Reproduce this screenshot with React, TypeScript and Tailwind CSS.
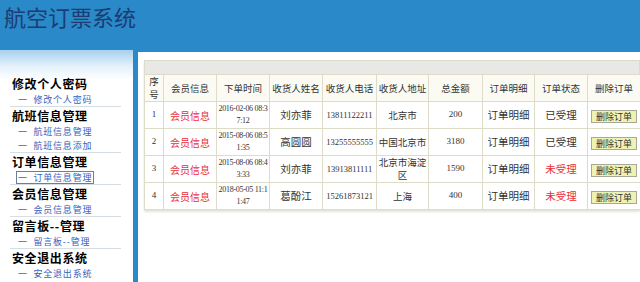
import React from "react";

const menu = [
  { title: "修改个人密码", subs: ["修改个人密码"] },
  { title: "航班信息管理", subs: ["航班信息管理", "航班信息添加"] },
  { title: "订单信息管理", subs: ["订单信息管理"], focused: true },
  { title: "会员信息管理", subs: ["会员信息管理"] },
  { title: "留言板--管理", subs: ["留言板--管理"] },
  { title: "安全退出系统", subs: ["安全退出系统"] },
];

const headers = ["序号", "会员信息", "下单时间", "收货人姓名", "收货人电话", "收货人地址", "总金额", "订单明细", "订单状态", "删除订单"];
const widths = [19, 53, 53, 53, 54, 52, 54, 52, 53, 53];

const orders = [
  { id: "1", time: "2016-02-06 08:37:12", name: "刘亦菲", phone: "13811122211", addr: "北京市", total: "200", done: true },
  { id: "2", time: "2015-08-06 08:51:35", name: "高圆圆", phone: "13255555555", addr: "中国北京市", total: "3180", done: true },
  { id: "3", time: "2015-08-06 08:43:33", name: "刘亦菲", phone: "13913811111", addr: "北京市海淀区", total: "1590", done: false },
  { id: "4", time: "2018-05-05 11:11:47", name: "葛酚江", phone: "15261873121", addr: "上海", total: "400", done: false },
];

const sans = "font-['Microsoft_YaHei','Noto_Sans_CJK_SC',sans-serif]";
const serif = "font-['Liberation_Serif','Noto_Sans_CJK_SC',serif]";
const cell = "border border-[#dcdcc8] text-center align-middle px-[1px]";

export default function App() {
  return (
    <div className={`w-[640px] h-[282px] overflow-hidden bg-[#2a89c8] ${sans}`}>
      {/* header */}
      <div className="h-[50px] pl-[4px] pt-[2px]">
        <h1 className="text-[22px] leading-[28px] text-[#1b3d74]">航空订票系统</h1>
      </div>

      <div className="flex h-[232px]">
        {/* sidebar */}
        <div className="w-[133px] shrink-0 bg-[linear-gradient(to_bottom,#a6d0ee_0px,#e4f1fb_16px,#ffffff_30px)] pt-[25px] pl-[10px] pr-[12px]">
          {menu.map((m, i) => (
            <div key={m.title} className={i < menu.length - 1 ? "border-b border-[#d6dde3]" : ""}>
              <div className="pl-[2px] text-[12px] leading-[17px] h-[17px] font-bold tracking-[0.6px] text-black">
                {m.title}
              </div>
              {m.subs.map((s) => (
                <div key={s} className="flex items-center pl-[6px] h-[14px]">
                  <span
                    className={`text-[9px] leading-[11px] tracking-[0.8px] text-[#3464bd] px-[1px] ${
                      m.focused ? "border border-[#6d7f98]" : "border border-transparent"
                    }`}
                  >
                    一&nbsp;&nbsp;{s}
                  </span>
                </div>
              ))}
            </div>
          ))}
        </div>

        {/* main */}
        <div className="ml-[5px] mt-[2px] flex-1 bg-white pl-[6px] pt-[8px] overflow-hidden">
          <div className="w-[496px] shadow-[0_2px_2px_#e4e4dc]">
            <div className="h-[14px] bg-[#e8e8e6] border border-[#dcdcc8] border-b-0" />
            <table className="border-collapse table-fixed w-[496px] text-[10px] text-[#333]">
              <colgroup>
                {widths.map((w, i) => (
                  <col key={i} style={{ width: w }} />
                ))}
              </colgroup>
              <thead>
                <tr className="h-[27px] bg-[#fbfbf3]">
                  {headers.map((h, i) => (
                    <th key={h} className={`${cell} font-normal text-[9.5px] leading-[13px] ${i === 0 ? "px-[4px]" : ""}`}>
                      {h}
                    </th>
                  ))}
                </tr>
              </thead>
              <tbody>
                {orders.map((o) => (
                  <tr key={o.id} className="h-[27px] bg-white">
                    <td className={`${cell} ${serif} text-[9px]`}>{o.id}</td>
                    <td className={`${cell} text-[10px] text-[#e8313c]`}>会员信息</td>
                    <td className={`${cell} ${serif} text-[8px] leading-[12px] tracking-[-0.3px] whitespace-nowrap`}>
                      {o.time.slice(0, 15)}
                      <br />
                      {o.time.slice(15)}
                    </td>
                    <td className={`${cell} text-[10.5px]`}>{o.name}</td>
                    <td className={`${cell} ${serif} text-[8.5px]`}>{o.phone}</td>
                    <td className={`${cell} text-[9.5px] leading-[13px]`}>{o.addr}</td>
                    <td className={`${cell} ${serif} text-[9px]`}>{o.total}</td>
                    <td className={`${cell} text-[10.5px]`}>订单明细</td>
                    <td className={`${cell} text-[10.5px] ${o.done ? "" : "text-[#ea2c36]"}`}>{o.done ? "已受理" : "未受理"}</td>
                    <td className={`${cell}`}>
                      <button className="w-[46px] h-[13px] bg-[#eef3b4] border border-[#a7a996] text-[9px] leading-[11px] text-[#333]">
                        删除订单
                      </button>
                    </td>
                  </tr>
                ))}
              </tbody>
            </table>
          </div>
        </div>
      </div>
    </div>
  );
}
